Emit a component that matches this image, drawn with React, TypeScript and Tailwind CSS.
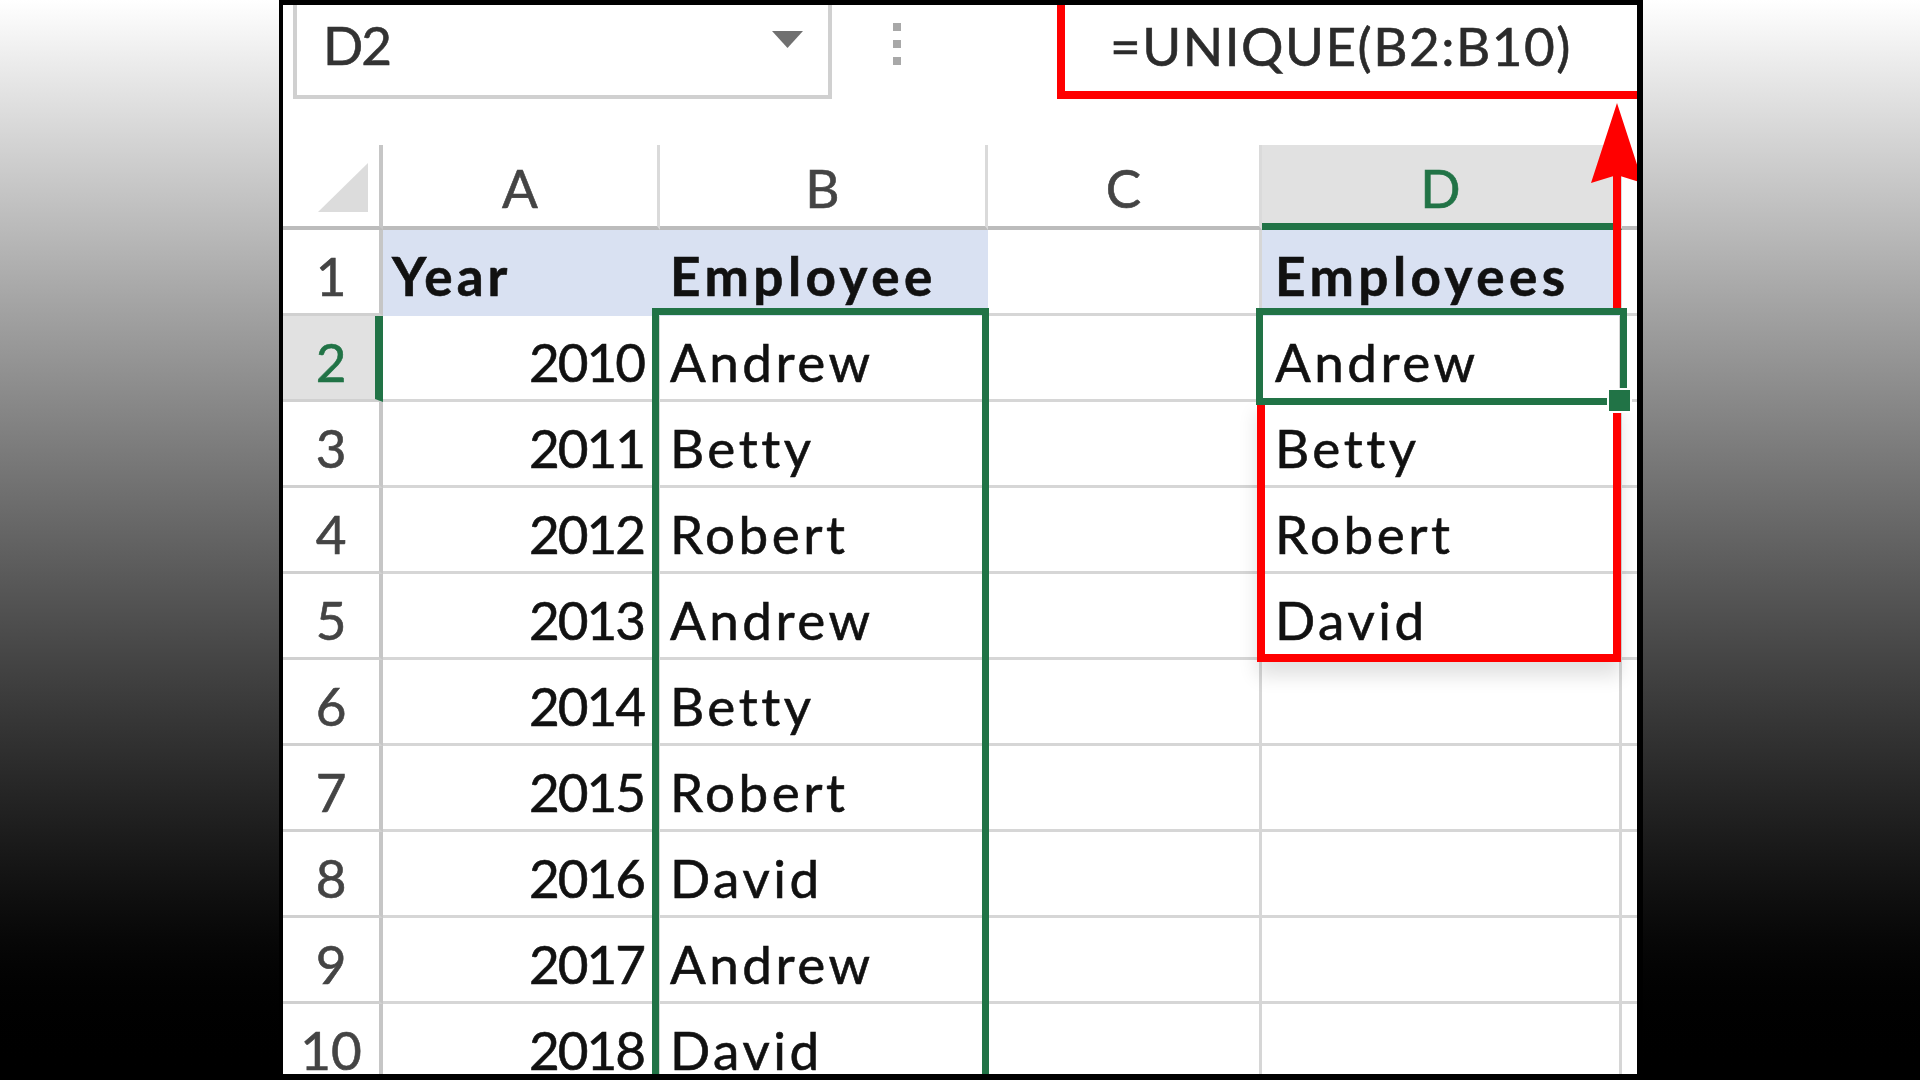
import React from 'react';

type Row = { n: number; year: string; emp: string; uniq?: string };

const rows: Row[] = [
  { n: 1, year: 'Year', emp: 'Employee', uniq: 'Employees' },
  { n: 2, year: '2010', emp: 'Andrew', uniq: 'Andrew' },
  { n: 3, year: '2011', emp: 'Betty', uniq: 'Betty' },
  { n: 4, year: '2012', emp: 'Robert', uniq: 'Robert' },
  { n: 5, year: '2013', emp: 'Andrew', uniq: 'David' },
  { n: 6, year: '2014', emp: 'Betty' },
  { n: 7, year: '2015', emp: 'Robert' },
  { n: 8, year: '2016', emp: 'David' },
  { n: 9, year: '2017', emp: 'Andrew' },
  { n: 10, year: '2018', emp: 'David' },
];

const cell = 'h-[86px] flex items-center pt-[7px] border-r-[3px] border-b-[3px] border-[#d6d6d6]';
const headCell = 'h-[85px] flex items-center justify-center pt-[4px] border-r-[3px] border-r-[#dadada] border-b-[4px] border-b-[#bcbcbc] text-[#444]';

const Sheet: React.FC = () => (
  <div className="relative h-full w-full overflow-hidden bg-white font-[Lato,sans-serif] text-[53px] leading-none [-webkit-text-stroke:0.6px_currentColor]">
    {/* formula bar */}
    <div className="flex h-[94px]">
      <div className="ml-[10px] flex w-[539px] items-center border-x-[4px] border-b-[4px] border-[#d0d0d0] pb-[11px] pl-[26px] pr-[25px] text-[#333]">
        <span className="flex-1 tracking-[-2px]">D2</span>
        <svg className="mt-[26px] self-start" width="31" height="17" viewBox="0 0 31 17">
          <polygon points="0,0 31,0 15.5,17" fill="#707070" />
        </svg>
      </div>
      <div className="w-[225px] pl-[61px] pt-[18px]">
        <div className="flex w-[9px] flex-col gap-[9px]">
          <span className="h-[8px] w-[8px] bg-[#a8a8a8]" />
          <span className="h-[8px] w-[8px] bg-[#a8a8a8]" />
          <span className="h-[8px] w-[8px] bg-[#a8a8a8]" />
        </div>
      </div>
      <div className="flex flex-1 items-center border-b-[8px] border-l-[8px] border-[#ff0000] pb-[5px] pl-[45px] tracking-[1.5px] text-[#2b2b2b]">
        =UNIQUE(B2:B10)
      </div>
    </div>

    {/* grid */}
    <div className="mt-[46px] grid grid-cols-[100px_277px_328px_274px_360px_15px]">
      <div className="flex h-[85px] items-end justify-end border-r-[4px] border-b-[4px] border-r-[#c6c6c6] border-b-[#bcbcbc] pb-[14px] pr-[11px]">
        <svg width="50" height="49" viewBox="0 0 50 49">
          <polygon points="50,0 50,49 0,49" fill="#dcdcdc" />
        </svg>
      </div>
      <div className={headCell}>A</div>
      <div className={headCell}>B</div>
      <div className={headCell}>C</div>
      <div className="flex h-[85px] items-center justify-center border-r-[3px] border-b-[7px] border-r-[#dadada] border-b-[#217346] bg-[#e1e1e1] pt-[6px] text-[#217346]">
        D
      </div>
      <div className="h-[85px] border-b-[4px] border-b-[#bcbcbc]" />

      {rows.map((r) => {
        const head = r.n === 1;
        const sel = r.n === 2;
        return (
          <React.Fragment key={r.n}>
            <div
              className={
                sel
                  ? 'flex h-[86px] items-center justify-center border-b-[3px] border-r-[8px] border-b-[#d0d0d0] border-r-[#217346] bg-[#e1e1e1] pt-[7px] pl-[4px] text-[#217346]'
                  : 'flex h-[86px] items-center justify-center border-b-[3px] border-r-[4px] border-b-[#d0d0d0] border-r-[#c6c6c6] pt-[7px] text-[#444]'
              }
            >
              {r.n}
            </div>
            {head ? (
              <div className={`${cell} border-[#d9e1f2] bg-[#d9e1f2] pl-[9px] font-bold tracking-[4px] text-[#111]`}>{r.year}</div>
            ) : (
              <div className={`${cell} justify-end pr-[13px] tracking-[-2px] text-[#111]`}>{r.year}</div>
            )}
            {head ? (
              <div className={`${cell} border-[#d9e1f2] bg-[#d9e1f2] pl-[10px] font-bold tracking-[4.5px] text-[#111]`}>{r.emp}</div>
            ) : (
              <div className={`${cell} pl-[10px] tracking-[3.5px] text-[#111]`}>{r.emp}</div>
            )}
            <div className={cell} />
            {head ? (
              <div className={`${cell} border-b-[#d9e1f2] bg-[#d9e1f2] pl-[13px] font-bold tracking-[4.5px] text-[#111]`}>{r.uniq}</div>
            ) : (
              <div className={`${cell} pl-[13px] tracking-[3.5px] text-[#111]`}>{r.uniq}</div>
            )}
            <div className="h-[86px] border-b-[3px] border-[#d6d6d6]" />
          </React.Fragment>
        );
      })}
    </div>

    {/* selected range B2:B10 */}
    <div className="absolute left-[369px] top-[303px] h-[800px] w-[337px] border-[7px] border-[#217346]" />

    {/* red outline D3:D5 and arrow to formula */}
    <div className="absolute left-[974px] top-[393px] h-[264px] w-[364px] border-x-[8px] border-b-[8px] border-[#ff0000] shadow-[0_14px_18px_rgba(0,0,0,0.12)]" />
    <div className="absolute left-[1330px] top-[165px] h-[145px] w-[8px] bg-[#ff0000]" />
    <svg className="absolute left-[1308px] top-[98px]" width="52" height="80" viewBox="0 0 52 80">
      <polygon points="26,0 52,80 26,72 0,80" fill="#ff0000" />
    </svg>

    {/* active cell D2 */}
    <div className="absolute left-[973px] top-[303px] h-[97px] w-[371px] border-[7px] border-[#217346]" />
    <div className="absolute left-[1324px] top-[383px] h-[25px] w-[25px] border-2 border-white bg-[#217346]" />
  </div>
);

export default function App() {
  return (
    <div className="flex h-[1080px] w-[1920px] overflow-hidden bg-black">
      <div className="w-[279px] bg-linear-to-b from-white to-black" />
      <div className="w-[1364px] border-b-[6px] border-l-[4px] border-r-[6px] border-t-[5px] border-black">
        <Sheet />
      </div>
      <div className="flex-1 bg-linear-to-b from-white to-black" />
    </div>
  );
}
